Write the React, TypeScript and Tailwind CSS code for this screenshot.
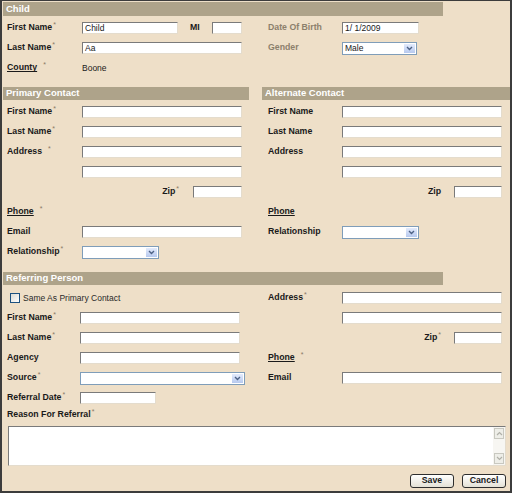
import React from "react";

const Req = ({ gap = 0 }: { gap?: number }) => (
  <span
    className={`relative -top-[3px] text-[7px] font-normal text-[#8a7a66] ${gap ? "ml-[6px]" : "ml-[1px]"}`}
  >
    *
  </span>
);

const Label = ({
  children,
  w = "w-[75px]",
  muted,
}: {
  children: React.ReactNode;
  w?: string;
  muted?: boolean;
}) => (
  <div className={`${w} shrink-0 font-bold text-[8.75px] ${muted ? "text-[#8c806c]" : "text-[#1a1a1a]"}`}>
    {children}
  </div>
);

const TextBox = ({ w = "w-[160px]", value = "" }: { w?: string; value?: string }) => (
  <div
    className={`${w} h-[12px] bg-white border-t border-l border-[#7a7a7a] border-r border-b border-r-[#e4dccd] border-b-[#e4dccd] text-[8.5px] leading-[11px] pl-[2px] text-[#1a1a1a]`}
  >
    {value}
  </div>
);

const Select = ({ w = "w-[77px]", value = "" }: { w?: string; value?: string }) => (
  <div className={`${w} h-[13px] bg-white border border-[#7f9db9] flex items-stretch`}>
    <div className="flex-1 text-[8.5px] leading-[11px] pl-[2px] text-[#1a1a1a]">{value}</div>
    <div className="w-[11px] m-[1px] bg-gradient-to-b from-[#e3ebfc] to-[#b7c9ef] flex items-center justify-center">
      <svg width="7" height="5" viewBox="0 0 7 5">
        <path d="M1 1 L3.5 3.5 L6 1" fill="none" stroke="#4d6185" strokeWidth="1.4" />
      </svg>
    </div>
  </div>
);

const Row = ({ children, className = "" }: { children?: React.ReactNode; className?: string }) => (
  <div className={`h-[20px] flex items-center ${className}`}>{children}</div>
);

const Header = ({ title, className = "" }: { title: string; className?: string }) => (
  <div className={`bg-[#aea38a] text-white font-bold text-[9.5px] pl-[3px] flex items-center ${className}`}>
    {title}
  </div>
);

const Button = ({ children }: { children: React.ReactNode }) => (
  <div className="w-[44px] h-[14px] rounded-[3px] border border-[#2e2e2e] bg-gradient-to-b from-white to-[#e4e1d6] flex items-center justify-center font-bold text-[8.75px] text-[#1a1a1a]">
    {children}
  </div>
);

export default function App() {
  return (
    <div className="w-[512px] h-[493px] bg-[#eedfc8] border-x-2 border-b-2 border-t border-[#3c3c3c] flex flex-col font-['Liberation_Sans',Arial,sans-serif]">
      <Header title="Child" className="ml-[1px] mt-[1px] w-[440px] h-[14px]" />
      <div className="pl-[5px] mt-[2px]">
        <Row>
          <Label>
            First Name
            <Req />
          </Label>
          <TextBox w="w-[96px]" value="Child" />
          <Label w="w-[22px] ml-[12px]">MI</Label>
          <TextBox w="w-[30px]" />
          <Label w="w-[74px] ml-[26px]" muted>
            Date Of Birth
          </Label>
          <TextBox w="w-[77px]" value="1/ 1/2009" />
        </Row>
        <Row>
          <Label>
            Last Name
            <Req />
          </Label>
          <TextBox value="Aa" />
          <Label w="w-[74px] ml-[26px]" muted>
            Gender
          </Label>
          <Select w="w-[75px]" value="Male" />
        </Row>
        <Row>
          <Label>
            <span className="underline">County</span>
            <Req gap={1} />
          </Label>
          <span className="text-[8.5px] text-[#1a1a1a]">Boone</span>
        </Row>
      </div>

      <div className="flex pl-[1px] mt-[9px]">
        <div className="w-[246px]">
          <Header title="Primary Contact" className="h-[13px]" />
          <div className="pl-[4px] mt-[2px]">
            <Row>
              <Label>
                First Name
                <Req />
              </Label>
              <TextBox />
            </Row>
            <Row>
              <Label>
                Last Name
                <Req />
              </Label>
              <TextBox />
            </Row>
            <Row>
              <Label>
                Address
                <Req gap={1} />
              </Label>
              <TextBox />
            </Row>
            <Row className="pl-[75px]">
              <TextBox />
            </Row>
            <Row className="w-[235px] justify-end">
              <Label w="w-auto">
                Zip
                <Req />
              </Label>
              <div className="ml-[14px]">
                <TextBox w="w-[49px]" />
              </div>
            </Row>
            <Row>
              <Label>
                <span className="underline">Phone</span>
                <Req gap={1} />
              </Label>
            </Row>
            <Row>
              <Label>Email</Label>
              <TextBox />
            </Row>
            <Row>
              <Label>
                Relationship
                <Req />
              </Label>
              <Select />
            </Row>
          </div>
        </div>
        <div className="ml-[13px] flex-1">
          <Header title="Alternate Contact" className="h-[13px]" />
          <div className="pl-[6px] mt-[2px]">
            <Row>
              <Label w="w-[74px]">First Name</Label>
              <TextBox />
            </Row>
            <Row>
              <Label w="w-[74px]">Last Name</Label>
              <TextBox />
            </Row>
            <Row>
              <Label w="w-[74px]">Address</Label>
              <TextBox />
            </Row>
            <Row className="pl-[74px]">
              <TextBox />
            </Row>
            <Row className="w-[234px] justify-end">
              <Label w="w-auto">Zip</Label>
              <div className="ml-[13px]">
                <TextBox w="w-[48px]" />
              </div>
            </Row>
            <Row>
              <Label w="w-[74px]">
                <span className="underline">Phone</span>
              </Label>
            </Row>
            <Row>
              <Label w="w-[74px]">Relationship</Label>
              <Select />
            </Row>
          </div>
        </div>
      </div>

      <Header title="Referring Person" className="ml-[1px] mt-[10px] w-[440px] h-[13px]" />
      <div className="flex pl-[1px] mt-[3px]">
        <div className="w-[246px] pl-[4px]">
          <Row className="pl-[3px]">
            <div className="w-[10px] h-[10px] border border-[#1c5180] bg-gradient-to-br from-[#dcdcd5] to-white" />
            <span className="ml-[3px] text-[8.5px] text-[#2a2a2a]">Same As Primary Contact</span>
          </Row>
          <Row>
            <Label w="w-[73px]">
              First Name
              <Req />
            </Label>
            <TextBox />
          </Row>
          <Row>
            <Label w="w-[73px]">
              Last Name
              <Req />
            </Label>
            <TextBox />
          </Row>
          <Row>
            <Label w="w-[73px]">Agency</Label>
            <TextBox />
          </Row>
          <Row>
            <Label w="w-[73px]">
              Source
              <Req />
            </Label>
            <Select w="w-[165px]" />
          </Row>
          <Row>
            <Label w="w-[73px]">
              Referral Date
              <Req />
            </Label>
            <TextBox w="w-[76px]" />
          </Row>
        </div>
        <div className="ml-[13px] flex-1 pl-[6px]">
          <Row>
            <Label w="w-[74px]">
              Address
              <Req />
            </Label>
            <TextBox />
          </Row>
          <Row className="pl-[74px]">
            <TextBox />
          </Row>
          <Row className="w-[234px] justify-end">
            <Label w="w-auto">
              Zip
              <Req />
            </Label>
            <div className="ml-[13px]">
              <TextBox w="w-[48px]" />
            </div>
          </Row>
          <Row>
            <Label w="w-[74px]">
              <span className="underline">Phone</span>
              <Req gap={1} />
            </Label>
          </Row>
          <Row>
            <Label w="w-[74px]">Email</Label>
            <TextBox />
          </Row>
        </div>
      </div>

      <div className="pl-[5px] h-[13px] flex items-center">
        <Label w="w-auto">
          Reason For Referral
          <Req />
        </Label>
      </div>
      <div className="ml-[6px] mt-[5px] w-[498px] h-[40px] bg-white border-t border-l border-[#7a7a7a] border-r border-b border-r-[#e4dccd] border-b-[#e4dccd] flex">
        <div className="flex-1" />
        <div className="w-[12px] bg-[#f7f6f2] flex flex-col justify-between">
          <div className="h-[11px] m-[1px] border border-[#c8c8c0] bg-[#eeeee8] flex items-center justify-center">
            <svg width="7" height="5" viewBox="0 0 7 5">
              <path d="M1 4 L3.5 1.5 L6 4" fill="none" stroke="#b0b0a8" strokeWidth="1.2" />
            </svg>
          </div>
          <div className="h-[11px] m-[1px] border border-[#c8c8c0] bg-[#eeeee8] flex items-center justify-center">
            <svg width="7" height="5" viewBox="0 0 7 5">
              <path d="M1 1 L3.5 3.5 L6 1" fill="none" stroke="#b0b0a8" strokeWidth="1.2" />
            </svg>
          </div>
        </div>
      </div>
      <div className="mt-[8px] flex justify-end gap-[8px] pr-[4px]">
        <Button>Save</Button>
        <Button>Cancel</Button>
      </div>
    </div>
  );
}
